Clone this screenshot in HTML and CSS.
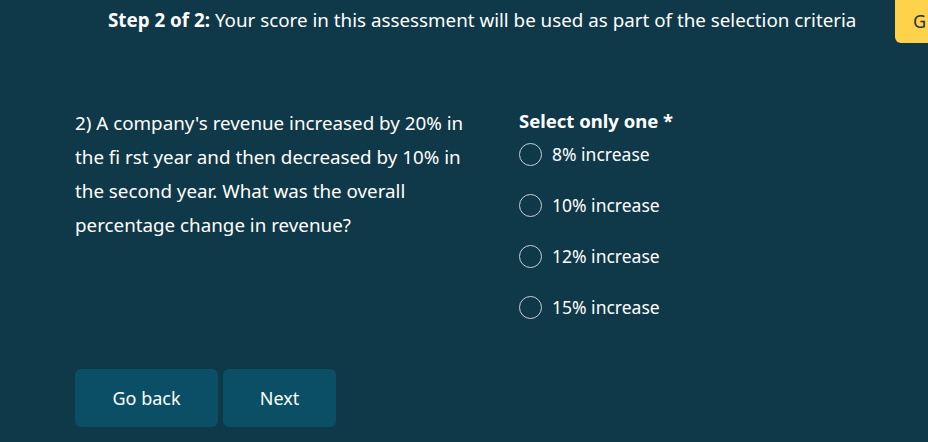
FILE: index.html
```html
<!DOCTYPE html>
<html lang="en">
<head>
<meta charset="utf-8">
<title>Assessment</title>
<link rel="stylesheet" href="styles.css">
</head>
<body>
<div class="page">
  <header class="topbar">
    <p class="step"><strong>Step 2 of 2:</strong> Your score in this assessment will be used as part of the selection criteria</p>
    <button class="help" type="button">G</button>
  </header>
  <main class="content">
    <div class="question">
      <p class="qtext">2) A company's revenue increased by 20% in the fi rst year and then decreased by 10% in the second year. What was the overall percentage change in revenue?</p>
      <fieldset class="choices">
        <legend class="legend">Select only one *</legend>
        <label class="option"><span class="radio"></span><span>8% increase</span></label>
        <label class="option"><span class="radio"></span><span>10% increase</span></label>
        <label class="option"><span class="radio"></span><span>12% increase</span></label>
        <label class="option"><span class="radio"></span><span>15% increase</span></label>
      </fieldset>
    </div>
    <div class="actions">
      <button class="btn btn-back" type="button">Go back</button>
      <button class="btn btn-next" type="button">Next</button>
    </div>
  </main>
</div>
</body>
</html>
```
FILE: styles.css
```css
* { box-sizing: border-box; }
html, body {
  margin: 0;
  padding: 0;
  background: #0f3849;
  overflow: hidden;
}
body {
  font-family: "Segoe UI", "Noto Sans", sans-serif;
  color: #ffffff;
  font-size: 18.8px;
  width: 928px;
  height: 442px;
}
.page { width: 928px; }
.topbar {
  display: flex;
  align-items: flex-start;
  padding-left: 108px;
  height: 44px;
}
.step {
  flex: none;
  margin: 8px 0 0 0;
  line-height: 24px;
  width: 787px;
  white-space: nowrap;
}
.step strong { font-weight: 700; }
.help {
  flex: none;
  width: 60px;
  height: 43px;
  border: none;
  border-radius: 0 0 0 6px;
  background: #ffd24c;
  color: #1d3340;
  font-family: inherit;
  font-size: 18px;
  text-align: left;
  padding: 0 0 0 18px;
  line-height: 43px;
  margin-top: 0;
}
.content {
  padding: 62px 0 0 75px;
}
.question {
  display: flex;
  gap: 44px;
}
.qtext {
  width: 400px;
  margin: 0;
  line-height: 34px;
}
.choices {
  border: none;
  margin: 0;
  padding: 0;
  min-width: 0;
  font-size: 17.5px;
}
.legend {
  padding: 0;
  font-weight: 700;
  font-size: 18.5px;
  line-height: 30px;
  margin-top: 3px;
}
.option {
  display: flex;
  align-items: center;
  gap: 10px;
  height: 51px;
  margin-top: -7.5px;
}
.option + .option { margin-top: 0; }
.radio {
  width: 23px;
  height: 23px;
  border: 1.5px solid #c8d0d4;
  border-radius: 50%;
  flex: none;
}
.actions {
  display: flex;
  gap: 5px;
  margin-top: 36.5px;
}
.btn {
  height: 58px;
  border: none;
  border-radius: 6px;
  background: #0a4f66;
  color: #ffffff;
  font-family: inherit;
  font-size: 18px;
}
.btn-back { width: 143px; }
.btn-next { width: 113px; }
```
